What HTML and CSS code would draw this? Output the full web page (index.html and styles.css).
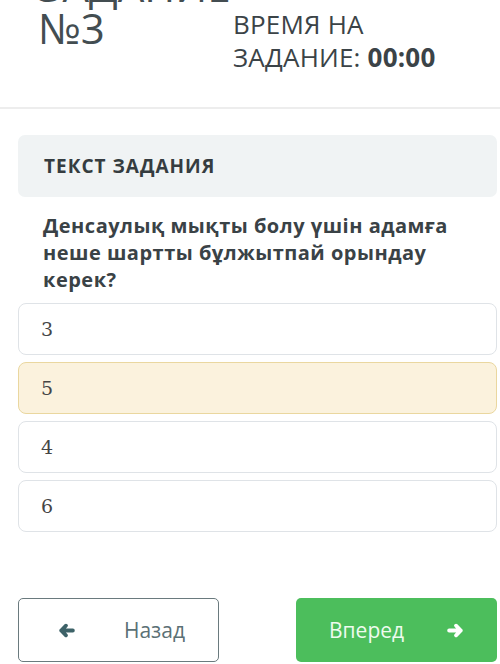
FILE: index.html
```html
<!DOCTYPE html>
<html lang="ru">
<head>
  <meta charset="UTF-8">
  <meta name="viewport" content="width=device-width, initial-scale=1">
  <title>Задание №3</title>
  <link rel="stylesheet" href="styles.css">
</head>
<body>
  <header class="task-head">
    <h1 class="task-title">ЗАДАНИЕ<br>№3</h1>
    <div class="task-time">ВРЕМЯ НА<br>ЗАДАНИЕ: <b>00:00</b></div>
  </header>
  <main class="task">
    <div class="task-label">ТЕКСТ ЗАДАНИЯ</div>
    <p class="question">Денсаулық мықты болу үшін адамға неше шартты бұлжытпай орындау керек?</p>
    <ul class="answers">
      <li class="answer">3</li>
      <li class="answer selected">5</li>
      <li class="answer">4</li>
      <li class="answer">6</li>
    </ul>
    <div class="nav">
      <a href="#" class="btn btn-back">
        <svg class="arrow" viewBox="0 0 16 14"><path d="M14 7H3M7.5 2.5 3 7l4.5 4.5"/></svg>
        <span>Назад</span>
      </a>
      <a href="#" class="btn btn-next">
        <span>Вперед</span>
        <svg class="arrow" viewBox="0 0 16 14"><path d="M2 7h11M8.5 2.5 13 7l-4.5 4.5"/></svg>
      </a>
    </div>
  </main>
</body>
</html>
```

FILE: styles.css
```css
:root {
  --text: #3e484c;
  --line: #dfe3e7;
  --green: #4cbe5c;
}
* { margin: 0; padding: 0; box-sizing: border-box; }
body {
  font-family: 'Open Sans', 'Noto Sans', sans-serif;
  color: var(--text);
  background: #fff;
  overflow: hidden;
}
a { text-decoration: none; color: inherit; }

/* header: title + timer */
.task-head { display: flex; height: 109px; border-bottom: 2px solid #ededed; overflow: hidden; }
.task-title { font-size: 42px; line-height: 42px; font-weight: 400; margin: -35px 0 0 38px; width: 195px; color: #434d51; }
.task-time { font-size: 26px; line-height: 33px; margin-top: 8px; letter-spacing: 0.2px; color: #3b4347; }
.task-time b { font-weight: 700; }

.task { margin: 0 3px 0 18px; }
.task-label { margin-top: 26px; height: 62px; background: #f0f3f4; border-radius: 7px; padding-left: 26px; display: flex; align-items: center; font-size: 19px; letter-spacing: 1px; font-weight: 700; color: #353c40; }
.question { margin: 15px 0 0 25px; width: 420px; font-size: 20px; line-height: 27px; letter-spacing: 0.5px; font-weight: 700; color: #3a4246; }

.answers { list-style: none; margin-top: 10px; display: flex; flex-direction: column; gap: 7px; }
.answer { height: 52px; border: 1px solid var(--line); border-radius: 8px; padding-left: 22px; display: flex; align-items: center; font-family: 'DejaVu Serif', 'Liberation Serif', serif; font-size: 19px; color: #454545; }
.answer.selected { background: #fbf2dd; border-color: #ead79f; }

/* prev / next buttons */
.nav { display: flex; justify-content: space-between; margin-top: 66px; }
.btn { width: 201px; height: 64px; border-radius: 5px; display: flex; align-items: center; justify-content: space-between; font-size: 21px; }
.btn .arrow { width: 17px; height: 15px; fill: none; stroke: currentColor; stroke-width: 3.6; stroke-linecap: round; stroke-linejoin: round; }
.btn-back { border: 1px solid #6a7a7e; color: #5b7075; padding: 0 33px 0 40px; }
.btn-back .arrow { stroke: #3d6268; margin-left: -1px; }
.btn-next { background: var(--green); color: #eefbef; padding: 0 33px 0 33px; }
.btn-next .arrow { stroke: #fff; }
```
